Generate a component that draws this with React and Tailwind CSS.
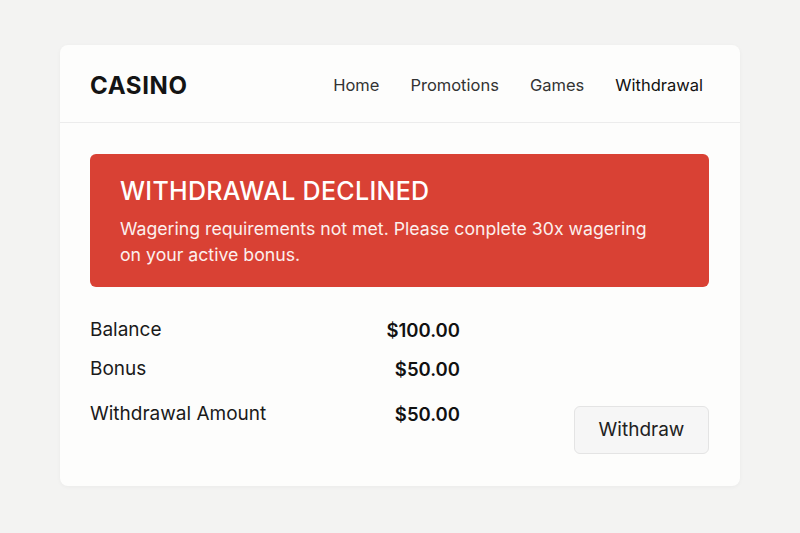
export default function App() {
  const rows = [
    { label: 'Balance', value: '$100.00', mt: 'mt-0' },
    { label: 'Bonus', value: '$50.00', mt: 'mt-[11px]' },
    { label: 'Withdrawal Amount', value: '$50.00', mt: 'mt-[17px]' },
  ];

  return (
    <div className="min-h-[533px] bg-[#f3f3f2] pt-[45px] font-['Inter','Liberation_Sans',sans-serif]">
      <div className="ml-[60px] h-[441px] w-[680px] rounded-lg bg-[#fdfdfc] shadow-[0_1px_4px_rgba(0,0,0,0.04)]">
        {/* header */}
        <header className="flex h-[78px] items-center justify-between border-b border-[#ececec] pl-[30px] pr-[37px] pt-[4px]">
          <div className="text-[24px] font-bold tracking-[0.6px] text-[#141414]">CASINO</div>
          <nav className="flex gap-[31px] text-[16.5px] text-[#333]">
            <a>Home</a>
            <a>Promotions</a>
            <a>Games</a>
            <a className="text-[#111]">Withdrawal</a>
          </nav>
        </header>

        <div className="pl-[30px] pr-[31px] pt-[31px]">
          {/* alert */}
          <div className="h-[133px] rounded-md bg-[#d94134] pl-[30px] pt-[22px] text-white">
            <div className="text-[25px] font-medium leading-[30px] tracking-[0.3px]">WITHDRAWAL DECLINED</div>
            <p className="mt-[10px] max-w-[540px] text-[17.7px] leading-[26px] text-[#fcefed]">
              Wagering requirements not met. Please conplete 30x wagering on your active bonus.
            </p>
          </div>

          {/* balances */}
          <div className="mt-[29px] flex items-start justify-between">
            <div className="w-[370px]">
              {rows.map((r) => (
                <div key={r.label} className={`flex justify-between leading-[28px] ${r.mt}`}>
                  <span className="text-[19px] text-[#1a1a1a]">{r.label}</span>
                  <span className="text-[18.5px] font-semibold text-[#111]">{r.value}</span>
                </div>
              ))}
            </div>
            <button className="mt-[90px] h-[48px] w-[135px] rounded-md border border-[#e4e4e4] bg-[#f6f6f6] text-[19px] text-[#222]">
              Withdraw
            </button>
          </div>
        </div>
      </div>
    </div>
  );
}
